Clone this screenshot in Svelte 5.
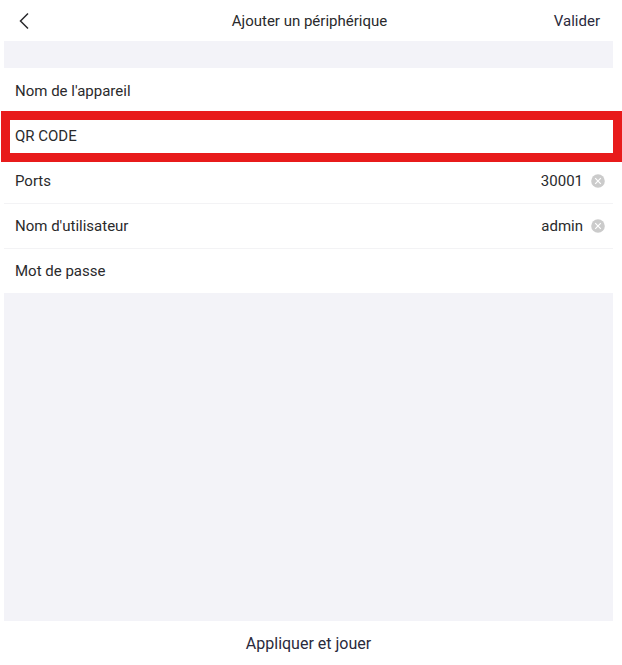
<script lang="ts">
  type Field = {
    id: string;
    label: string;
    value: string;
    type?: string;
    marked?: boolean;
  };

  let fields: Field[] = $state([
    { id: "name", label: "Nom de l'appareil", value: "" },
    { id: "qrcode", label: "QR CODE", value: "", marked: true },
    { id: "port", label: "Ports", value: "30001" },
    { id: "user", label: "Nom d'utilisateur", value: "admin" },
    { id: "password", label: "Mot de passe", value: "", type: "password" },
  ]);
</script>

<div class="screen">
  <header>
    <button class="back" aria-label="Retour">
      <svg width="10" height="18" viewBox="0 0 10 18">
        <path d="M9 1.5 1.5 9 9 16.5" />
      </svg>
    </button>
    <h1>Ajouter un périphérique</h1>
    <button class="submit">Valider</button>
  </header>

  <main>
    <form>
      {#each fields as field (field.id)}
        <div class="row" class:marked={field.marked}>
          <label for={field.id}>{field.label}</label>
          <input id={field.id} type={field.type ?? "text"} autocomplete="off" bind:value={field.value} />
          {#if field.value}
            <button type="button" class="clear" aria-label="Effacer" onclick={() => (field.value = "")}>
              <svg width="14" height="14" viewBox="0 0 14 14">
                <circle cx="7" cy="7" r="6.8" />
                <path d="M4.2 4.2 9.8 9.8M9.8 4.2 4.2 9.8" />
              </svg>
            </button>
          {/if}
        </div>
      {/each}
    </form>
  </main>

  <button class="apply">Appliquer et jouer</button>
</div>

<style>
  :global(body) {
    background: #fff;
  }
  .screen {
    display: flex;
    flex-direction: column;
    min-height: 100vh;
    box-sizing: border-box;
    padding: 0 9px 0 4px;
    font-family: Roboto, "Liberation Sans", sans-serif;
    font-size: 15px;
    color: #2a2a2c;
  }
  button {
    padding: 0;
    border: none;
    background: none;
    font: inherit;
    cursor: pointer;
  }
  header {
    display: grid;
    grid-template-columns: 1fr auto 1fr;
    align-items: center;
    height: 41px;
    box-sizing: border-box;
    padding: 1px 13px 0 15px;
  }
  h1 {
    margin: 0;
    font-size: 15px;
    font-weight: 400;
  }
  svg {
    display: block;
  }
  .back {
    justify-self: start;
  }
  .back path {
    fill: none;
    stroke: #29292c;
    stroke-width: 1.5;
  }
  .submit {
    justify-self: end;
    color: #2a2a3c;
  }
  main {
    flex: 1;
    padding-top: 27px;
    background: #f3f3f8;
  }
  form {
    background: #fff;
  }
  .row {
    position: relative;
    display: flex;
    align-items: center;
    height: 45px;
    box-sizing: border-box;
    padding: 0 8px 0 11px;
    border-top: 1px solid #f3f3f5;
  }
  .row:first-child {
    border-top: none;
  }
  /* red frame, runs past the row on every side */
  .marked::after {
    content: "";
    position: absolute;
    inset: -3px -9px -4px -3px;
    border: 9px solid #e81b1b;
    pointer-events: none;
    z-index: 1;
  }
  input {
    flex: 1;
    min-width: 0;
    padding: 0;
    border: none;
    outline: none;
    background: none;
    font: inherit;
    color: inherit;
    text-align: right;
  }
  .clear {
    margin-left: 8px;
  }
  .clear circle {
    fill: #cbcbcb;
  }
  .clear path {
    fill: none;
    stroke: #fff;
    stroke-width: 1.2;
  }
  .apply {
    height: 44px;
    font-size: 16px;
    color: #2a2a3c;
  }
</style>
